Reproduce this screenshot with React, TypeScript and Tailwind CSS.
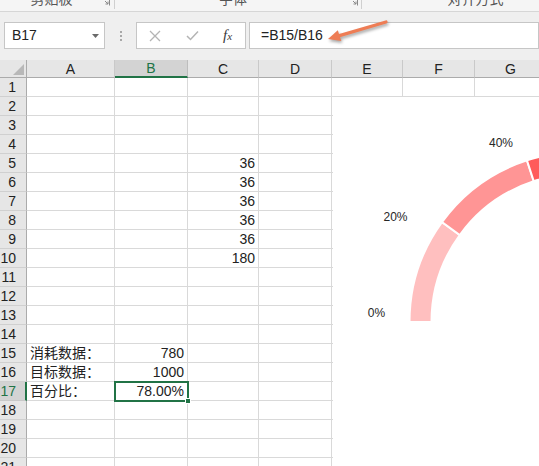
import React from 'react';

const COLS = ['A', 'B', 'C', 'D', 'E', 'F', 'G'];
const ROWS = Array.from({ length: 21 }, (_, i) => i + 1);

const CELLS: Record<string, { v: string; right?: boolean }> = {
  C5: { v: '36', right: true },
  C6: { v: '36', right: true },
  C7: { v: '36', right: true },
  C8: { v: '36', right: true },
  C9: { v: '36', right: true },
  C10: { v: '180', right: true },
  A15: { v: '消耗数据：' },
  A16: { v: '目标数据：' },
  A17: { v: '百分比：' },
  B15: { v: '780', right: true },
  B16: { v: '1000', right: true },
  B17: { v: '78.00%', right: true },
};

// gauge geometry, in chart coordinates
const CX = 246.5;
const CY = 225;
const R_OUT = 170;
const R_IN = 148;

function pt(r: number, deg: number) {
  const a = (deg * Math.PI) / 180;
  return `${(CX + r * Math.cos(a)).toFixed(2)} ${(CY - r * Math.sin(a)).toFixed(2)}`;
}

function segment(from: number, to: number) {
  return [
    `M ${pt(R_OUT, from)}`,
    `A ${R_OUT} ${R_OUT} 0 0 1 ${pt(R_OUT, to)}`,
    `L ${pt(R_IN, to)}`,
    `A ${R_IN} ${R_IN} 0 0 0 ${pt(R_IN, from)}`,
    'Z',
  ].join(' ');
}

const SEGMENTS = [
  { from: 180, to: 144, fill: '#ffbfbf' },
  { from: 144, to: 108, fill: '#ff9595' },
  { from: 108, to: 72, fill: '#ff5b5b' },
  { from: 72, to: 36, fill: '#ff2e2e' },
  { from: 36, to: 0, fill: '#e60000' },
];

function Launcher() {
  return (
    <svg width="7" height="7" viewBox="0 0 7 7" className="mb-[3px]">
      <path d="M0.5 0.5 H6.5 V6.5" fill="none" stroke="#8a8a8a" strokeWidth="1" />
      <path d="M2 2 L5 5 M5 2.5 V5 H2.5" fill="none" stroke="#8a8a8a" strokeWidth="1" />
    </svg>
  );
}

function Gauge() {
  return (
    <div className="absolute left-[333px] top-[97px] right-0 bottom-0 bg-white">
      <svg width="206" height="369" viewBox="0 0 206 369">
        {SEGMENTS.map((s) => (
          <path key={s.from} d={segment(s.from, s.to)} fill={s.fill} stroke="#ffffff" strokeWidth="2" />
        ))}
        <g fontFamily="Liberation Sans, Arial, sans-serif" fontSize="12" fill="#262626" textAnchor="middle">
          <text x="43.5" y="220">0%</text>
          <text x="62.5" y="124">20%</text>
          <text x="168" y="50">40%</text>
        </g>
      </svg>
    </div>
  );
}

export default function App() {
  return (
    <div className="relative w-[539px] h-[466px] overflow-hidden bg-white text-[14px] text-[#222] font-['Liberation_Sans','Noto_Sans_CJK_SC',sans-serif]">
      {/* Ribbon group labels (cut off at top) */}
      <div className="flex h-[12px] overflow-hidden bg-[#f5f5f5] border-b border-[#d6d6d6] text-[#555] leading-[14px]">
        <div className="flex shrink-0 items-end w-[115px] border-r border-[#d0d0d0] mb-[2px]">
          <span className="flex-1 text-center mb-[3px]">剪贴板</span>
          <span className="mr-[4px]"><Launcher /></span>
        </div>
        <div className="flex shrink-0 items-end w-[247px] border-r border-[#d0d0d0] mb-[2px]">
          <span className="flex-1 text-center mb-[3px]">字体</span>
          <span className="mr-[3px]"><Launcher /></span>
        </div>
        <div className="flex shrink-0 items-end w-[227px] mb-[2px]">
          <span className="flex-1 text-center mb-[3px]">对齐方式</span>
        </div>
      </div>

      {/* Formula bar */}
      <div className="flex items-start h-[48px] pt-[10px] pl-[4px] bg-[#efefef]">
        <div className="flex items-center justify-between w-[101px] h-[27px] bg-white border border-[#c6c6c6] pl-[7px] pr-[5px]">
          <span>B17</span>
          <svg width="7" height="4" viewBox="0 0 7 4">
            <path d="M0 0 H7 L3.5 4 Z" fill="#6a6a6a" />
          </svg>
        </div>
        <div className="flex flex-col gap-[2px] w-[31px] items-center pt-[9px]">
          <span className="w-[2px] h-[2px] bg-[#a8a8a8]" />
          <span className="w-[2px] h-[2px] bg-[#a8a8a8]" />
          <span className="w-[2px] h-[2px] bg-[#a8a8a8]" />
        </div>
        <div className="flex items-center w-[110px] h-[27px] bg-white border border-[#c6c6c6] pl-[12px]">
          <svg width="12" height="12" viewBox="0 0 12 12">
            <path d="M1 1 L11 11 M11 1 L1 11" stroke="#b4b4b4" strokeWidth="1.3" />
          </svg>
          <svg width="13" height="11" viewBox="0 0 13 11" className="ml-[25px]">
            <path d="M1 6 L4.5 9.5 L12 1.5" fill="none" stroke="#b4b4b4" strokeWidth="1.5" />
          </svg>
          <span className="ml-[24px] italic text-[#3a3a3a] font-['Liberation_Serif',serif] text-[15px] leading-none">
            f<span className="text-[11px]">x</span>
          </span>
        </div>
        <div className="flex items-center flex-1 h-[27px] ml-[3px] bg-white border border-[#c6c6c6] pl-[11px]">
          =B15/B16
        </div>
      </div>

      {/* Sheet grid */}
      <div className="grid grid-cols-[27px_88px_73px_71px_73px_71px_72px_72px]">
        <div className="relative h-[18px] bg-[#e6e6e6] border-r border-b border-[#ababab]">
          <svg width="11" height="11" viewBox="0 0 11 11" className="absolute right-[2px] bottom-[2px]">
            <path d="M11 0 V11 H0 Z" fill="#b8b8b8" />
          </svg>
        </div>
        {COLS.map((c) => (
          <div
            key={c}
            className={
              c === 'B'
                ? 'flex items-center justify-center h-[18px] bg-[#d3d3d3] border-r border-[#bdbdbd] border-b-2 border-b-[#217346] text-[#217346] leading-none'
                : 'flex items-center justify-center h-[18px] bg-[#e6e6e6] border-r border-[#c9c9c9] border-b border-b-[#ababab] leading-none'
            }
          >
            {c}
          </div>
        ))}

        {ROWS.map((r) => (
          <React.Fragment key={r}>
            <div
              className={
                r === 17
                  ? 'flex items-center justify-end h-[19px] pr-[9px] bg-[#d3d3d3] border-b border-[#c9c9c9] border-r-2 border-r-[#217346] text-[#217346]'
                  : 'flex items-center justify-end h-[19px] pr-[10px] bg-[#e6e6e6] border-b border-[#d0d0d0] border-r border-r-[#ababab]'
              }
            >
              {r}
            </div>
            {COLS.map((c) => {
              const key = `${c}${r}`;
              const cell = CELLS[key];
              const selected = key === 'B17';
              return (
                <div
                  key={key}
                  className={
                    'relative flex items-center h-[19px] px-[3px] border-r border-b border-[#d9d9d9] whitespace-nowrap ' +
                    (cell?.right ? 'justify-end ' : 'justify-start ') +
                    (selected ? 'outline-2 outline-[#217346] -outline-offset-1 z-10' : '')
                  }
                >
                  {cell?.v}
                  {selected && (
                    <span className="absolute right-[-4px] bottom-[-4px] w-[6px] h-[6px] bg-[#217346] border border-white" />
                  )}
                </div>
              );
            })}
          </React.Fragment>
        ))}
      </div>

      <Gauge />

      {/* annotation arrow pointing at the formula */}
      <svg
        width="539"
        height="60"
        viewBox="0 0 539 60"
        className="absolute left-0 top-0 pointer-events-none drop-shadow-[1px_2px_1.5px_rgba(0,0,0,0.35)]"
      >
        <line x1="386" y1="22" x2="339.5" y2="35.6" stroke="#ee7d55" strokeWidth="3.2" strokeLinecap="round" />
        <polygon points="328,39 341.3,41 337.8,30.2" fill="#ee7d55" />
      </svg>
    </div>
  );
}
